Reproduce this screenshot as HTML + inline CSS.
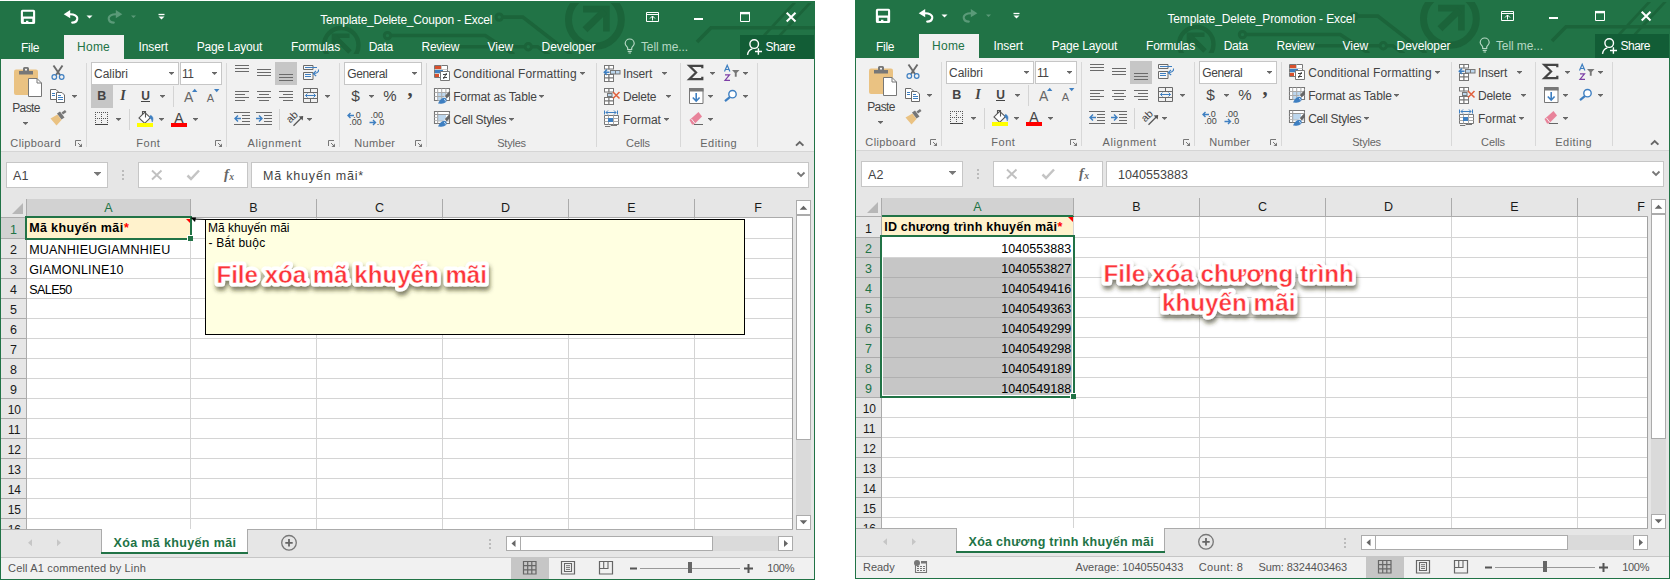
<!DOCTYPE html>
<html><head><meta charset="utf-8"><title>Excel</title><style>html,body{margin:0;padding:0;background:#fff;}
body{width:1670px;height:580px;overflow:hidden;position:relative;font-family:"Liberation Sans",sans-serif;}
.w{position:absolute;width:815px;height:580px;overflow:hidden;}
.r{position:absolute;}
.s{position:absolute;overflow:visible;}
.t{position:absolute;white-space:nowrap;line-height:20px;height:20px;font-family:"Liberation Sans",sans-serif;}</style></head><body>
<div class="w" style="left:0px;top:0px">
<div class="r" style="left:0px;top:1px;width:815px;height:579px;background:#217346;"></div>
<div class="r" style="left:0px;top:1px;width:815px;height:58px;background:#217346;"></div>
<svg class="s" style="left:0;top:3px;overflow:hidden" width="815" height="51" viewBox="0 3 815 51" fill="none" stroke="#1b643a" stroke-linecap="butt">
<circle cx="341.300" cy="45.200" r="17.200" stroke-width="4.400"/>
<path d="M334 47V35.700H349.500" stroke-width="4.600"/><path d="M335 37L350 52" stroke-width="5"/>
<circle cx="387.500" cy="35.600" r="3.200" stroke-width="3"/><path d="M391.500 35.600H485.300L514 54.500" stroke-width="3.500"/>
<circle cx="499.200" cy="17.100" r="3.200" stroke-width="3"/><path d="M503.200 17.100H522.800L571 54.500" stroke-width="3.700"/>
<circle cx="528.300" cy="46.800" r="3.200" stroke-width="3"/><path d="M524.300 46.800H428M532.300 46.800H537.700L549 55" stroke-width="3.500"/>
<circle cx="594.900" cy="19.800" r="26.400" stroke-width="7"/>
<path d="M583.100 9.100H606.400V31.500" stroke-width="6.600"/><path d="M585 29.800L604.500 10.800" stroke-width="7"/>
<path d="M815 27.800H711L697 42" stroke-width="3.600"/><path d="M797 0L764 35.600M812.700 0L779.700 35.600" stroke-width="2.700"/>
</svg>
<div class="r" style="left:64px;top:35px;width:60px;height:24px;background:#f1f1f1;"></div>
<div class="r" style="left:740px;top:35px;width:74px;height:24px;background:#125d36;"></div>
<div class="t" style="top:9.84px;font-size:12px;color:#fff;left:320.20px;letter-spacing:-0.225px;">Template_Delete_Coupon - Excel</div>
<div class="t" style="top:37.84px;font-size:12px;color:#fff;left:21.00px;letter-spacing:-0.284px;">File</div>
<div class="t" style="top:36.84px;font-size:12px;color:#217346;left:77.10px;letter-spacing:0.223px;">Home</div>
<div class="t" style="top:36.84px;font-size:12px;color:#fff;left:138.40px;letter-spacing:-0.052px;">Insert</div>
<div class="t" style="top:36.84px;font-size:12px;color:#fff;left:196.70px;letter-spacing:-0.162px;">Page Layout</div>
<div class="t" style="top:36.84px;font-size:12px;color:#fff;left:291.00px;letter-spacing:-0.126px;">Formulas</div>
<div class="t" style="top:36.84px;font-size:12px;color:#fff;left:368.80px;letter-spacing:-0.362px;">Data</div>
<div class="t" style="top:36.84px;font-size:12px;color:#fff;left:421.60px;letter-spacing:-0.307px;">Review</div>
<div class="t" style="top:36.84px;font-size:12px;color:#fff;left:487.50px;letter-spacing:-0.023px;">View</div>
<div class="t" style="top:36.84px;font-size:12px;color:#fff;left:541.60px;letter-spacing:-0.099px;">Developer</div>
<div class="t" style="top:36.84px;font-size:12px;color:#b5d8c3;left:640.90px;letter-spacing:-0.091px;">Tell me...</div>
<div class="t" style="top:36.84px;font-size:12px;color:#fff;left:765.50px;letter-spacing:-0.504px;">Share</div>
<svg class="s" style="left:0;top:0" width="815" height="60" fill="none" stroke="#fff">
<!-- save -->
<rect x="21.900" y="10.800" width="12.200" height="12.200" rx=".6" stroke-width="2.100"/><path d="M22 16.600h12v2.100h-12zM22 18.500h1.800v4.500h-1.800zM32.300 18.500h1.700v4.500h-1.700zM26 20.800h2.400v2.400h-2.400z" fill="#fff" stroke="none"/>
<!-- undo -->
<path d="M63.700 14.200l6.500-4.300v8.400z" fill="#fff" stroke="none"/><path d="M69.500 14.300c4.500-.3 8.100 1.700 7.700 4.700-.4 2.500-2.700 3.600-5 3.600" stroke-width="2.200" stroke-linecap="round"/>
<path d="M86.500 15.500h6l-3 3z" fill="#fff" stroke="none"/>
<!-- redo (disabled) -->
<g stroke="#5a9a78"><path d="M122.300 14.200l-6.500-4.300v8.400z" fill="#5a9a78" stroke="none"/><path d="M116.500 14.300c-4.500-.3-8.100 1.700-7.700 4.700.4 2.500 2.700 3.600 5 3.600" stroke-width="2.200" stroke-linecap="round"/></g>
<path d="M131 15.500h5l-2.500 2.500z" fill="#5a9a78" stroke="none"/>
<!-- customize -->
<path d="M158.500 14.500h6" stroke-width="1.300"/><path d="M158.500 16.500h6l-3 3z" fill="#fff" stroke="none"/>
<!-- ribbon display -->
<path d="M646.500 12.500h12v9h-12z" stroke-width="1"/><path d="M646 14.500h13" stroke-width="1"/><path d="M652.500 20.500v-4.500M650 18.500l2.500-2.500 2.500 2.500" stroke-width="1"/>
<!-- minimize / maximize / close -->
<path d="M694 19h9" stroke-width="2"/>
<path d="M740.500 13h9v8.500h-9z" stroke-width="1"/><path d="M740 13.100h10" stroke-width="2.400"/>
<path d="M786.700 12.700l8.800 8.800M795.500 12.700l-8.800 8.800" stroke-width="2"/>
<!-- bulb -->
<g stroke="#b5d8c3" stroke-width="1.200"><path d="M627.700 49.500v-1.300c0-1.500-2.500-2.300-2.500-4.700a4.500 4.500 0 0 1 9 0c0 2.400-2.500 3.200-2.500 4.700v1.300z"/><path d="M627.700 51.300h4M628.500 53h2.500"/></g>
<!-- share person -->
<circle cx="754.200" cy="44.100" r="4.300" stroke-width="1.400"/><path d="M747.500 54.800c.6-3.400 2.200-5.200 4.800-5.900" stroke-width="1.400"/><path d="M758.400 48.300v6.500M755 51.500h7" stroke-width="1.400"/>
</svg>
<div class="r" style="left:1px;top:59px;width:813px;height:93px;background:#f1f1f1;"></div>
<div class="r" style="left:1px;top:151px;width:813px;height:1px;background:#d5d5d5;"></div>
<div class="r" style="left:86px;top:63px;width:1px;height:84px;background:#d8d8d8;"></div>
<div class="r" style="left:226px;top:63px;width:1px;height:84px;background:#d8d8d8;"></div>
<div class="r" style="left:339px;top:63px;width:1px;height:84px;background:#d8d8d8;"></div>
<div class="r" style="left:426px;top:63px;width:1px;height:84px;background:#d8d8d8;"></div>
<div class="r" style="left:596px;top:63px;width:1px;height:84px;background:#d8d8d8;"></div>
<div class="r" style="left:680px;top:63px;width:1px;height:84px;background:#d8d8d8;"></div>
<div class="r" style="left:757px;top:63px;width:1px;height:84px;background:#d8d8d8;"></div>
<div class="r" style="left:173px;top:86px;width:1px;height:21px;background:#d4d4d4;"></div>
<div class="r" style="left:129px;top:109px;width:1px;height:21px;background:#d4d4d4;"></div>
<div class="r" style="left:279px;top:109px;width:1px;height:21px;background:#d4d4d4;"></div>
<div class="r" style="left:91px;top:62px;width:88px;height:23px;background:#fff;border:1px solid #c6c6c6;box-sizing:border-box;"></div>
<div class="r" style="left:179.5px;top:62px;width:42.5px;height:23px;background:#fff;border:1px solid #c6c6c6;box-sizing:border-box;"></div>
<div class="r" style="left:344px;top:62px;width:78px;height:23px;background:#fff;border:1px solid #c6c6c6;box-sizing:border-box;"></div>
<div class="r" style="left:91px;top:85px;width:22px;height:23px;background:#c6c6c6;"></div>
<div class="r" style="left:275px;top:62px;width:22px;height:23px;background:#c6c6c6;"></div>
<div class="t" style="top:98.34px;font-size:12px;color:#444;left:12.20px;letter-spacing:-0.617px;">Paste</div>
<div class="t" style="top:132.59px;font-size:11px;color:#666;left:10.30px;letter-spacing:0.391px;">Clipboard</div>
<div class="t" style="top:132.59px;font-size:11px;color:#666;left:136.30px;letter-spacing:0.498px;">Font</div>
<div class="t" style="top:132.59px;font-size:11px;color:#666;left:247.60px;letter-spacing:0.565px;">Alignment</div>
<div class="t" style="top:132.59px;font-size:11px;color:#666;left:354.30px;letter-spacing:0.313px;">Number</div>
<div class="t" style="top:132.59px;font-size:11px;color:#666;left:497.20px;letter-spacing:-0.209px;">Styles</div>
<div class="t" style="top:132.59px;font-size:11px;color:#666;left:626.10px;letter-spacing:-0.110px;">Cells</div>
<div class="t" style="top:132.59px;font-size:11px;color:#666;left:700.30px;letter-spacing:0.452px;">Editing</div>
<div class="t" style="top:64.44px;font-size:12px;color:#444;left:94.00px;letter-spacing:-0.001px;">Calibri</div>
<div class="t" style="top:64.44px;font-size:12px;color:#444;left:182.00px;letter-spacing:-0.478px;">11</div>
<div class="t" style="top:64.44px;font-size:12px;color:#444;left:347.30px;letter-spacing:-0.384px;">General</div>
<div class="t" style="top:63.54px;font-size:12px;color:#444;left:453.20px;letter-spacing:0.126px;">Conditional Formatting</div>
<div class="t" style="top:86.74px;font-size:12px;color:#444;left:453.20px;letter-spacing:-0.154px;">Format as Table</div>
<div class="t" style="top:110.34px;font-size:12px;color:#444;left:453.20px;letter-spacing:-0.335px;">Cell Styles</div>
<div class="t" style="top:63.54px;font-size:12px;color:#444;left:623.10px;letter-spacing:-0.168px;">Insert</div>
<div class="t" style="top:86.74px;font-size:12px;color:#444;left:623.10px;letter-spacing:-0.281px;">Delete</div>
<div class="t" style="top:110.34px;font-size:12px;color:#444;left:623.10px;letter-spacing:-0.050px;">Format</div>
<div class="t" style="top:85.87px;font-size:12.5px;color:#444;left:97.30px;font-weight:bold;">B</div>
<div class="t" style="top:86.05px;font-size:14px;color:#444;left:120.30px;font-weight:bold;font-style:italic;font-family:'Liberation Serif',serif;">I</div>
<div class="t" style="top:86.44px;font-size:12px;color:#444;left:141.20px;font-weight:bold;">U</div>
<div class="r" style="left:141px;top:101px;width:9px;height:1px;background:#444;"></div>
<div class="t" style="top:87.45px;font-size:14px;color:#666;left:184.00px;">A</div>
<div class="t" style="top:88.49px;font-size:11px;color:#666;left:206.80px;">A</div>
<div class="t" style="top:107.95px;font-size:14px;color:#444;left:174.30px;">A</div>
<div class="t" style="top:86.43px;font-size:15.5px;color:#444;left:351.30px;">$</div>
<div class="t" style="top:86.40px;font-size:15px;color:#444;left:383.20px;">%</div>
<div class="t" style="top:79.30px;font-size:20.5px;color:#444;left:407.60px;font-weight:bold;font-family:'Liberation Serif',serif;">,</div>
<div class="t" style="top:105.18px;font-size:9px;color:#444;left:353.20px;">.0</div>
<div class="t" style="top:112.38px;font-size:9px;color:#444;left:349.20px;">.00</div>
<div class="t" style="top:105.18px;font-size:9px;color:#444;left:370.50px;">.00</div>
<div class="t" style="top:112.38px;font-size:9px;color:#444;left:376.80px;">.0</div>
<svg class="s" style="left:0;top:0" width="815" height="160" fill="none">
<rect x="14" y="69.500" width="24" height="25.500" rx="2" fill="#eac282"/>
<path d="M19 74.500v-3.500h4v-2.500a1.500 1.500 0 0 1 1.500-1.500h3a1.500 1.500 0 0 1 1.500 1.500v2.500h4v3.500z" fill="#777"/><rect x="25" y="68.800" width="2" height="1.700" fill="#f1f1f1"/>
<path d="M28.500 78.500h8.500l4.500 4.500v13.500h-13z" fill="#fff" stroke="#777" stroke-width="1"/><path d="M37 78.500v4.500h4.500" stroke="#777" stroke-width="1"/>
<path d="M23 122h5v.4l-2.500 2.600-2.500-2.600z" fill="#666"/>
<path d="M53.500 65.500l6.500 9.500M62.500 65.500l-6.500 9.500" stroke="#6a6a6a" stroke-width="1.900"/><circle cx="54.300" cy="77" r="2.300" stroke="#3e7fc1" stroke-width="1.200"/><circle cx="61.700" cy="77" r="2.300" stroke="#3e7fc1" stroke-width="1.200"/>
<path d="M50.500 89.500h5.500l2.500 2.500v7.500h-8z" fill="#fff" stroke="#6a6a6a"/><path d="M56.500 92.500h5.500l2.500 2.500v7.500h-8z" fill="#fff" stroke="#6a6a6a"/>
<path d="M52 93.500h3M52 95.500h3M58 97.500h5M58 99.500h5M58 95.500h3" stroke="#3e7fc1" stroke-width="1"/>
<path d="M72 95h5v.4l-2.500 2.600-2.500-2.600z" fill="#666"/>
<path d="M50.500 118.500l7-4 4 5.500-5 5.500z" fill="#eac282"/><path d="M57 113.500l3-2 4.500 6-3 2z" fill="#777"/><path d="M61.500 112.500l3.500-2.500 1.500 2-3.500 2.500z" fill="#777"/>
<path d="M169 72h5v.4l-2.500 2.600-2.500-2.600z" fill="#666"/>
<path d="M212 72h5v.4l-2.500 2.600-2.500-2.600z" fill="#666"/>
<path d="M412 72h5v.4l-2.500 2.600-2.500-2.600z" fill="#666"/>
<path d="M160 95h5v.4l-2.500 2.600-2.500-2.600z" fill="#666"/>
<path d="M192 92l2.700-3.200 2.700 3.200z" fill="#3e7fc1"/><path d="M214 89h5.400l-2.700 3.200z" fill="#3e7fc1"/>
<rect x="95" y="112" width="1" height="1" fill="#555"/><rect x="97" y="112" width="1" height="1" fill="#555"/><rect x="99" y="112" width="1" height="1" fill="#555"/><rect x="101" y="112" width="1" height="1" fill="#555"/><rect x="103" y="112" width="1" height="1" fill="#555"/><rect x="105" y="112" width="1" height="1" fill="#555"/><rect x="107" y="112" width="1" height="1" fill="#555"/><rect x="95" y="118" width="1" height="1" fill="#555"/><rect x="97" y="118" width="1" height="1" fill="#555"/><rect x="99" y="118" width="1" height="1" fill="#555"/><rect x="101" y="118" width="1" height="1" fill="#555"/><rect x="103" y="118" width="1" height="1" fill="#555"/><rect x="105" y="118" width="1" height="1" fill="#555"/><rect x="107" y="118" width="1" height="1" fill="#555"/><rect x="95" y="112" width="1" height="1" fill="#555"/><rect x="95" y="114" width="1" height="1" fill="#555"/><rect x="95" y="116" width="1" height="1" fill="#555"/><rect x="95" y="118" width="1" height="1" fill="#555"/><rect x="95" y="120" width="1" height="1" fill="#555"/><rect x="95" y="122" width="1" height="1" fill="#555"/><rect x="101" y="112" width="1" height="1" fill="#555"/><rect x="101" y="114" width="1" height="1" fill="#555"/><rect x="101" y="116" width="1" height="1" fill="#555"/><rect x="101" y="118" width="1" height="1" fill="#555"/><rect x="101" y="120" width="1" height="1" fill="#555"/><rect x="101" y="122" width="1" height="1" fill="#555"/><rect x="107" y="112" width="1" height="1" fill="#555"/><rect x="107" y="114" width="1" height="1" fill="#555"/><rect x="107" y="116" width="1" height="1" fill="#555"/><rect x="107" y="118" width="1" height="1" fill="#555"/><rect x="107" y="120" width="1" height="1" fill="#555"/><rect x="107" y="122" width="1" height="1" fill="#555"/>
<rect x="95" y="124" width="13" height="1" fill="#444"/>
<path d="M116 118h5v.4l-2.500 2.600-2.500-2.600z" fill="#666"/>
<path d="M144.700 112.300l5.700 5.400-5.700 5.600-5.700-5.400z" fill="#fff" stroke="#555" stroke-width="1.100"/><path d="M145.500 117.500v-6h-3v3.500" stroke="#555" stroke-width="1.100"/><path d="M150.500 115.300c2.500 1 3.300 3.500 1.700 6.800-.3-2-1-3.500-2.700-4.600z" fill="#3e7fc1" stroke="#3e7fc1" stroke-width=".5"/>
<rect x="137" y="123" width="16" height="4" fill="#ffff00"/>
<path d="M159 118h5v.4l-2.500 2.600-2.500-2.600z" fill="#666"/>
<rect x="171" y="123" width="16" height="4" fill="#ff0000"/>
<path d="M193 118h5v.4l-2.500 2.600-2.500-2.600z" fill="#666"/>
<rect x="235" y="65" width="14" height="1" fill="#6a6a6a"/><rect x="235" y="68" width="14" height="1" fill="#6a6a6a"/><rect x="235" y="71" width="14" height="1" fill="#6a6a6a"/>
<rect x="257" y="69" width="14" height="1" fill="#6a6a6a"/><rect x="257" y="72" width="14" height="1" fill="#6a6a6a"/><rect x="257" y="75" width="14" height="1" fill="#6a6a6a"/>
<rect x="279" y="74" width="14" height="1" fill="#6a6a6a"/><rect x="279" y="77" width="14" height="1" fill="#6a6a6a"/><rect x="279" y="80" width="14" height="1" fill="#6a6a6a"/>
<rect x="235" y="91" width="14" height="1" fill="#6a6a6a"/><rect x="235" y="94" width="10" height="1" fill="#6a6a6a"/><rect x="235" y="97" width="14" height="1" fill="#6a6a6a"/><rect x="235" y="100" width="10" height="1" fill="#6a6a6a"/>
<rect x="257" y="91" width="14" height="1" fill="#6a6a6a"/><rect x="259.0" y="94" width="10" height="1" fill="#6a6a6a"/><rect x="257" y="97" width="14" height="1" fill="#6a6a6a"/><rect x="259.0" y="100" width="10" height="1" fill="#6a6a6a"/>
<rect x="279" y="91" width="14" height="1" fill="#6a6a6a"/><rect x="283" y="94" width="10" height="1" fill="#6a6a6a"/><rect x="279" y="97" width="14" height="1" fill="#6a6a6a"/><rect x="283" y="100" width="10" height="1" fill="#6a6a6a"/>
<path d="M303.500 65.500h9.500v4h-9.500zM303.500 72.500h9.500v7h-9.500z" stroke="#6a6a6a" fill="#f6f6f6"/><path d="M305 67.500h12M305 74.500h6M305 76.500h6" stroke="#3e7fc1"/><path d="M318.500 69.500c.5 2.500-1.500 4-5 4" stroke="#3e7fc1" stroke-width="1.100"/><path d="M316 71l-2.800 2.600 3 2.400" stroke="#3e7fc1" stroke-width="1.100"/>
<path d="M303.500 88.500h14v14h-14zM303.500 92.500h14M303.500 98.500h14M310.500 88.500v4M310.500 98.500v4" stroke="#6a6a6a"/><path d="M305.500 95.500h10M307.500 93.500l-2 2 2 2M313.500 93.500l2 2-2 2" stroke="#3e7fc1"/>
<path d="M325 95h5v.4l-2.500 2.600-2.500-2.600z" fill="#666"/>
<rect x="234" y="112" width="16" height="1" fill="#6a6a6a"/><rect x="234" y="124" width="16" height="1" fill="#6a6a6a"/>
<rect x="242" y="115" width="8" height="1" fill="#6a6a6a"/><rect x="242" y="118" width="8" height="1" fill="#6a6a6a"/><rect x="242" y="121" width="8" height="1" fill="#6a6a6a"/>
<path d="M241 118.500h-6M238 115.500l-3 3 3 3" stroke="#3e7fc1" stroke-width="1.400"/>
<rect x="256" y="112" width="16" height="1" fill="#6a6a6a"/><rect x="256" y="124" width="16" height="1" fill="#6a6a6a"/>
<rect x="264" y="115" width="8" height="1" fill="#6a6a6a"/><rect x="264" y="118" width="8" height="1" fill="#6a6a6a"/><rect x="264" y="121" width="8" height="1" fill="#6a6a6a"/>
<path d="M256 118.500h6M259 115.500l3 3-3 3" stroke="#3e7fc1" stroke-width="1.400"/>
<path d="M293.500 125.700l8-8" stroke="#555" stroke-width="1.300"/><path d="M303.200 116l-4.600.5 4.100 4.100z" fill="#555"/>
<text transform="translate(290.300 123.600) rotate(-45)" font-size="10.500" fill="#444" font-family="Liberation Sans">ab</text>
<path d="M307 118h5v.4l-2.500 2.600-2.500-2.600z" fill="#666"/>
<path d="M369 95h5v.4l-2.500 2.600-2.500-2.600z" fill="#666"/>
<path d="M348 115.500h6M350.500 113l-2.500 2.500 2.500 2.500" stroke="#3e7fc1" stroke-width="1.400"/><path d="M369.500 122.500h6M373 120l2.500 2.500-2.500 2.500" stroke="#3e7fc1" stroke-width="1.400"/>
</svg>
<svg class="s" style="left:0;top:0" width="815" height="160" fill="none">
<path d="M434.500 65.500h13v12h-13z" fill="#fff" stroke="#777"/><path d="M441.500 65.500v12M434.500 69.500h13M434.500 73.500h13" stroke="#c8c8c8"/>
<rect x="435" y="66" width="6" height="3" fill="#d9502c"/><rect x="435" y="70" width="8" height="3" fill="#3e7fc1"/><rect x="435" y="74" width="4" height="3" fill="#d9502c"/>
<path d="M440.500 71.500h9v9h-9z" fill="#fff" stroke="#777"/><path d="M443 74.500h4M443 77.500h4M446.500 73l-3 6" stroke="#444" stroke-width="1"/>
<path d="M434.500 88.5h15v12h-15z" fill="#fff" stroke="#777" stroke-width="1.100"/>
<rect x="438" y="92.5" width="8" height="8" fill="#bdd7ee"/><path d="M434.500 92.5h15M434.500 96.5h15M437.700 88.5v12M441.700 88.5v12M445.900 88.5v12" stroke="#aaa"/>
<path d="M451 89.0l-12.500 14.500h3l9.500-11z" fill="#f1f1f1"/>
<path d="M450 90.5v4.600l-3.300 3.300-1.800-2.500z" fill="#666"/>
<path d="M438 103.6c1.500-3.200 3.500-5.800 6.200-5.800 1.500 0 2.500 1 2.500 2.400 0 2.600-3.700 3.900-8.700 3.400z" fill="#3e7fc1"/><path d="M444 99.3c1 .2 1.500 1 1.300 2" stroke="#fff" stroke-width=".8" fill="none"/>
<path d="M434.500 111.5h15v12h-15z" fill="#fff" stroke="#777" stroke-width="1.100"/>
<rect x="438" y="115.0" width="8" height="6" fill="#bdd7ee"/><path d="M434.500 114.5h15M437.700 111.5v12" stroke="#999"/><path d="M434.500 117.5h3M434.500 120.5h3M438 121.0h11" stroke="#bbb" stroke-width="1"/>
<path d="M451 112.0l-12.500 14.500h3l9.500-11z" fill="#f1f1f1"/>
<path d="M450 113.5v4.600l-3.300 3.300-1.800-2.500z" fill="#666"/>
<path d="M438 126.6c1.500-3.200 3.500-5.800 6.200-5.800 1.500 0 2.500 1 2.500 2.400 0 2.600-3.700 3.900-8.700 3.400z" fill="#3e7fc1"/><path d="M444 122.3c1 .2 1.500 1 1.300 2" stroke="#fff" stroke-width=".8" fill="none"/>
<path d="M580 72h5v.4l-2.500 2.600-2.500-2.600z" fill="#666"/>
<path d="M539 95h5v.4l-2.500 2.600-2.500-2.600z" fill="#666"/>
<path d="M509 118h5v.4l-2.500 2.600-2.500-2.600z" fill="#666"/>
<rect x="604.5" y="65.5" width="4.500" height="3.500" stroke="#777" fill="#fff"/><rect x="609.0" y="65.5" width="4.500" height="3.500" stroke="#777" fill="#fff"/>
<rect x="604.5" y="74.5" width="4.500" height="3.500" stroke="#777" fill="#fff"/><rect x="609.0" y="74.5" width="4.500" height="3.500" stroke="#777" fill="#fff"/><rect x="604.5" y="78.0" width="4.500" height="3.500" stroke="#777" fill="#fff"/><rect x="609.0" y="78.0" width="4.500" height="3.500" stroke="#777" fill="#fff"/>
<rect x="610.500" y="70.500" width="9.500" height="3.500" stroke="#777" fill="#bdd7ee"/><path d="M615.500 70.500v3.500" stroke="#777"/>
<path d="M609.500 72.200h-5M607 69.500l-2.700 2.700 2.700 2.700" stroke="#3e7fc1" stroke-width="1.500"/>
<path d="M662 72h5v.4l-2.500 2.600-2.500-2.600z" fill="#666"/>
<rect x="604.5" y="88.5" width="4.500" height="3.500" stroke="#777" fill="#fff"/><rect x="609.0" y="88.5" width="4.500" height="3.500" stroke="#777" fill="#fff"/>
<rect x="604.5" y="97.5" width="4.500" height="3.500" stroke="#777" fill="#fff"/><rect x="609.0" y="97.5" width="4.500" height="3.500" stroke="#777" fill="#fff"/><rect x="604.5" y="101.0" width="4.500" height="3.500" stroke="#777" fill="#fff"/><rect x="609.0" y="101.0" width="4.500" height="3.500" stroke="#777" fill="#fff"/>
<rect x="607.500" y="93.500" width="4.500" height="3" stroke="#777" fill="#bdd7ee"/>
<path d="M613 92l6.500 6.500M619.500 92l-6.500 6.500" stroke="#e0603c" stroke-width="1.500"/>
<path d="M666 95h5v.4l-2.500 2.600-2.500-2.600z" fill="#666"/>
<path d="M604.500 110.500v4M617.500 110.500v4M606 112.500h10M608 110.500l-2 2 2 2M614 110.500l2 2-2 2" stroke="#3e7fc1"/>
<path d="M604.500 115.500h14v9h-14z" fill="#fff" stroke="#777"/><path d="M604.500 118.500h14M604.500 121.500h14M608.500 115.500v9M613.500 115.500v9" stroke="#aaa"/><rect x="608" y="118" width="5" height="4" fill="#3e7fc1"/><path d="M605 126.500h5l1-1h6" stroke="#777"/>
<path d="M664 118h5v.4l-2.500 2.600-2.500-2.600z" fill="#666"/>
<path d="M702.300 68.300v-2.500h-13l6.800 6.700-6.800 6.700h13v-2.500" stroke="#444" stroke-width="2.200" stroke-linejoin="miter"/>
<path d="M710 72h5v.4l-2.500 2.600-2.500-2.600z" fill="#666"/>
<path d="M724.500 71.500l2.700-6.300 2.700 6.300M725.500 69.500h3.500" stroke="#3e7fc1" stroke-width="1.200"/><path d="M725 74.800h4.500l-4.500 5.500h5" stroke="#7d3fa6" stroke-width="1.200"/>
<path d="M732 70h7.500l-2.800 3v3.800h-1.900v-3.800z" fill="#777"/>
<path d="M743 72h5v.4l-2.500 2.600-2.500-2.600z" fill="#666"/>
<path d="M689.500 88.500h13.500v15h-13.500z" fill="#fff" stroke="#777"/><rect x="689" y="88" width="14.500" height="3.500" fill="#777"/><path d="M696.200 93v8M692.800 97.500l3.400 3.500 3.400-3.500" stroke="#3e7fc1" stroke-width="1.600"/>
<path d="M708 95h5v.4l-2.500 2.600-2.500-2.600z" fill="#666"/>
<circle cx="732.500" cy="94.200" r="3.700" stroke="#3e7fc1" stroke-width="1.400" fill="#fff"/><path d="M729.800 97.200l-4.800 4" stroke="#3e7fc1" stroke-width="2.200"/>
<path d="M743 95h5v.4l-2.500 2.600-2.500-2.600z" fill="#666"/>
<path d="M689.500 120l9-8 3.500 4.500-8 8h-2z" fill="#e8839a"/><path d="M691.500 119l3.500 4.500" stroke="#f1f1f1" stroke-width="1"/><rect x="694" y="124" width="9" height="1" fill="#666"/>
<path d="M708 118h5v.4l-2.500 2.600-2.500-2.600z" fill="#666"/>
<path d="M75.5 146v-5.500h5.500" stroke="#777"/><path d="M78 143l3 3" stroke="#777"/><path d="M82 143.500v3.500h-3.500z" fill="#777"/>
<path d="M215.5 146v-5.500h5.500" stroke="#777"/><path d="M218 143l3 3" stroke="#777"/><path d="M222 143.500v3.500h-3.500z" fill="#777"/>
<path d="M328.5 146v-5.500h5.500" stroke="#777"/><path d="M331 143l3 3" stroke="#777"/><path d="M335 143.500v3.500h-3.500z" fill="#777"/>
<path d="M415.5 146v-5.500h5.500" stroke="#777"/><path d="M418 143l3 3" stroke="#777"/><path d="M422 143.500v3.500h-3.500z" fill="#777"/>
<path d="M796 145.700l3.700-3.700 3.700 3.700" stroke="#666" stroke-width="1.900"/>
</svg>
<div class="r" style="left:1px;top:152px;width:813px;height:47px;background:#e6e6e6;"></div>
<div class="r" style="left:6px;top:162px;width:102px;height:26px;background:#fff;border:1px solid #c6c6c6;box-sizing:border-box;"></div>
<div class="r" style="left:138px;top:162px;width:110px;height:26px;background:#fff;border:1px solid #c6c6c6;box-sizing:border-box;"></div>
<div class="r" style="left:251px;top:162px;width:558px;height:26px;background:#fff;border:1px solid #c6c6c6;box-sizing:border-box;"></div>
<div class="t" style="top:166.37px;font-size:12.5px;color:#444;left:13.00px;letter-spacing:0.105px;">A1</div>
<div class="t" style="top:166.37px;font-size:12.5px;color:#444;left:263.00px;letter-spacing:0.813px;">Mã khuyến mãi*</div>
<svg class="s" style="left:0;top:150px" width="815" height="50" viewBox="0 150 815 50" fill="none">
<path d="M94 172h7v.5l-3.500 3.500-3.500-3.500z" fill="#777"/>
<rect x="122" y="170" width="2" height="2" fill="#bbb"/><rect x="122" y="174" width="2" height="2" fill="#bbb"/><rect x="122" y="178" width="2" height="2" fill="#bbb"/>
<path d="M152 170.500l9.500 9M161.500 170.500l-9.500 9" stroke="#c0c0c0" stroke-width="1.900"/>
<path d="M187.500 175.500l3.500 3.500 8-8.500" stroke="#c4c4c4" stroke-width="2.500"/>
<path d="M797.500 172.500l3.500 3.500 3.500-3.500" stroke="#777" stroke-width="1.800"/>
</svg>
<div class="t" style="top:164.28px;font-size:14.5px;color:#666;left:224.00px;font-weight:bold;font-style:italic;font-family:'Liberation Serif',serif;">f</div>
<div class="t" style="top:166.91px;font-size:9.5px;color:#666;left:229.20px;font-weight:bold;font-style:italic;font-family:'Liberation Serif',serif;">x</div>
<div class="r" style="left:1px;top:199px;width:813px;height:331px;background:#e6e6e6;"></div>
<div class="r" style="left:27px;top:218px;width:766px;height:312px;background:#fff;"></div>
<div class="r" style="left:1px;top:217px;width:793px;height:1px;background:#ababab;"></div>
<div class="r" style="left:26px;top:199px;width:1px;height:331px;background:#ababab;"></div>
<div class="r" style="left:27px;top:199px;width:163px;height:18px;background:#d2d2d2;"></div>
<div class="r" style="left:27px;top:216px;width:164px;height:2px;background:#217346;"></div>
<div class="r" style="left:1px;top:218px;width:25px;height:20px;background:#d2d2d2;"></div>
<div class="r" style="left:190px;top:199px;width:1px;height:18px;background:#ababab;"></div>
<div class="r" style="left:316px;top:199px;width:1px;height:18px;background:#ababab;"></div>
<div class="r" style="left:442px;top:199px;width:1px;height:18px;background:#ababab;"></div>
<div class="r" style="left:568px;top:199px;width:1px;height:18px;background:#ababab;"></div>
<div class="r" style="left:694px;top:199px;width:1px;height:18px;background:#ababab;"></div>
<div class="r" style="left:190px;top:218px;width:1px;height:312px;background:#d4d4d4;"></div>
<div class="r" style="left:316px;top:218px;width:1px;height:312px;background:#d4d4d4;"></div>
<div class="r" style="left:442px;top:218px;width:1px;height:312px;background:#d4d4d4;"></div>
<div class="r" style="left:568px;top:218px;width:1px;height:312px;background:#d4d4d4;"></div>
<div class="r" style="left:694px;top:218px;width:1px;height:312px;background:#d4d4d4;"></div>
<div class="r" style="left:27px;top:238px;width:766px;height:1px;background:#d4d4d4;"></div>
<div class="r" style="left:1px;top:238px;width:25px;height:1px;background:#ababab;"></div>
<div class="r" style="left:27px;top:258px;width:766px;height:1px;background:#d4d4d4;"></div>
<div class="r" style="left:1px;top:258px;width:25px;height:1px;background:#ababab;"></div>
<div class="r" style="left:27px;top:278px;width:766px;height:1px;background:#d4d4d4;"></div>
<div class="r" style="left:1px;top:278px;width:25px;height:1px;background:#ababab;"></div>
<div class="r" style="left:27px;top:298px;width:766px;height:1px;background:#d4d4d4;"></div>
<div class="r" style="left:1px;top:298px;width:25px;height:1px;background:#ababab;"></div>
<div class="r" style="left:27px;top:318px;width:766px;height:1px;background:#d4d4d4;"></div>
<div class="r" style="left:1px;top:318px;width:25px;height:1px;background:#ababab;"></div>
<div class="r" style="left:27px;top:338px;width:766px;height:1px;background:#d4d4d4;"></div>
<div class="r" style="left:1px;top:338px;width:25px;height:1px;background:#ababab;"></div>
<div class="r" style="left:27px;top:358px;width:766px;height:1px;background:#d4d4d4;"></div>
<div class="r" style="left:1px;top:358px;width:25px;height:1px;background:#ababab;"></div>
<div class="r" style="left:27px;top:378px;width:766px;height:1px;background:#d4d4d4;"></div>
<div class="r" style="left:1px;top:378px;width:25px;height:1px;background:#ababab;"></div>
<div class="r" style="left:27px;top:398px;width:766px;height:1px;background:#d4d4d4;"></div>
<div class="r" style="left:1px;top:398px;width:25px;height:1px;background:#ababab;"></div>
<div class="r" style="left:27px;top:418px;width:766px;height:1px;background:#d4d4d4;"></div>
<div class="r" style="left:1px;top:418px;width:25px;height:1px;background:#ababab;"></div>
<div class="r" style="left:27px;top:438px;width:766px;height:1px;background:#d4d4d4;"></div>
<div class="r" style="left:1px;top:438px;width:25px;height:1px;background:#ababab;"></div>
<div class="r" style="left:27px;top:458px;width:766px;height:1px;background:#d4d4d4;"></div>
<div class="r" style="left:1px;top:458px;width:25px;height:1px;background:#ababab;"></div>
<div class="r" style="left:27px;top:478px;width:766px;height:1px;background:#d4d4d4;"></div>
<div class="r" style="left:1px;top:478px;width:25px;height:1px;background:#ababab;"></div>
<div class="r" style="left:27px;top:498px;width:766px;height:1px;background:#d4d4d4;"></div>
<div class="r" style="left:1px;top:498px;width:25px;height:1px;background:#ababab;"></div>
<div class="r" style="left:27px;top:518px;width:766px;height:1px;background:#d4d4d4;"></div>
<div class="r" style="left:1px;top:518px;width:25px;height:1px;background:#ababab;"></div>
<div class="r" style="left:792px;top:218px;width:1px;height:312px;background:#a0a0a0;"></div>
<div class="r" style="left:1px;top:529px;width:813px;height:1px;background:#ababab;"></div>
<svg class="s" style="left:10px;top:201px" width="14" height="14"><path d="M13 2v11h-11z" fill="#b7b7b7"/></svg>
<div class="t" style="top:198.37px;font-size:12.5px;color:#217346;left:104.33px;">A</div>
<div class="t" style="top:198.37px;font-size:12.5px;color:#1a1a1a;left:249.33px;">B</div>
<div class="t" style="top:198.37px;font-size:12.5px;color:#1a1a1a;left:374.99px;">C</div>
<div class="t" style="top:198.37px;font-size:12.5px;color:#1a1a1a;left:500.99px;">D</div>
<div class="t" style="top:198.37px;font-size:12.5px;color:#1a1a1a;left:627.33px;">E</div>
<div class="t" style="top:198.37px;font-size:12.5px;color:#1a1a1a;left:754.18px;">F</div>
<div class="t" style="top:220.07px;font-size:12.5px;color:#217346;left:10.12px;">1</div>
<div class="t" style="top:240.07px;font-size:12.5px;color:#1a1a1a;left:10.12px;">2</div>
<div class="t" style="top:260.07px;font-size:12.5px;color:#1a1a1a;left:10.12px;">3</div>
<div class="t" style="top:280.07px;font-size:12.5px;color:#1a1a1a;left:10.12px;">4</div>
<div class="t" style="top:300.07px;font-size:12.5px;color:#1a1a1a;left:10.12px;">5</div>
<div class="t" style="top:320.07px;font-size:12.5px;color:#1a1a1a;left:10.12px;">6</div>
<div class="t" style="top:340.07px;font-size:12.5px;color:#1a1a1a;left:10.12px;">7</div>
<div class="t" style="top:360.07px;font-size:12.5px;color:#1a1a1a;left:10.12px;">8</div>
<div class="t" style="top:380.07px;font-size:12.5px;color:#1a1a1a;left:10.12px;">9</div>
<div class="t" style="top:400.24px;font-size:12px;color:#1a1a1a;left:7.63px;">10</div>
<div class="t" style="top:420.24px;font-size:12px;color:#1a1a1a;left:8.07px;">11</div>
<div class="t" style="top:440.24px;font-size:12px;color:#1a1a1a;left:7.63px;">12</div>
<div class="t" style="top:460.24px;font-size:12px;color:#1a1a1a;left:7.63px;">13</div>
<div class="t" style="top:480.24px;font-size:12px;color:#1a1a1a;left:7.63px;">14</div>
<div class="t" style="top:500.24px;font-size:12px;color:#1a1a1a;left:7.63px;">15</div>
<div class="r" style="left:1px;top:518px;width:25px;height:11px;overflow:hidden"><div class="t" style="top:2.24px;font-size:12px;color:#1a1a1a;left:6.63px;">16</div></div>
<div class="r" style="left:27px;top:218px;width:163px;height:20px;background:#fff2cc;"></div>
<div class="r" style="left:205px;top:219px;width:540px;height:116px;background:#ffffe1;border:1px solid #000;box-sizing:border-box;"></div>
<div class="t" style="top:218.34px;font-size:12px;color:#000;left:208.00px;letter-spacing:0.010px;">Mã khuyến mãi</div>
<div class="t" style="top:233.44px;font-size:12px;color:#000;left:208.40px;letter-spacing:0.231px;">- Bắt buộc</div>
<div class="r" style="left:25px;top:216px;width:167px;height:24px;background:transparent;border:2px solid #217346;box-sizing:border-box;"></div>
<div class="r" style="left:187px;top:235px;width:6px;height:6px;background:#fff;"></div>
<div class="r" style="left:188px;top:236px;width:5px;height:5px;background:#217346;"></div>
<div class="t" style="top:217.67px;font-size:12.5px;color:#000;left:29.20px;letter-spacing:0.361px;font-weight:bold;">Mã khuyến mãi</div>
<div class="t" style="top:217.67px;font-size:12.5px;color:#f00;left:124.00px;font-weight:bold;">*</div>
<div class="t" style="top:240.17px;font-size:12.5px;color:#000;left:29.20px;letter-spacing:0.217px;">MUANHIEUGIAMNHIEU</div>
<div class="t" style="top:260.17px;font-size:12.5px;color:#000;left:29.20px;letter-spacing:0.176px;">GIAMONLINE10</div>
<div class="t" style="top:280.17px;font-size:12.5px;color:#000;left:29.20px;letter-spacing:-0.561px;">SALE50</div>
<svg class="s" style="left:180px;top:214px" width="30" height="12"><path d="M6 5h4v4z" fill="#f00"/><path d="M10.500 3.500h5.500l-1 4.500z" fill="#000"/><path d="M13 5l12 .5" stroke="#000" stroke-width="1"/></svg>
<svg class="s" style="left:0;top:0" width="815" height="580">
<filter id="sh1" x="-10%" y="-30%" width="120%" height="180%"><feDropShadow dx="1.200" dy="4" stdDeviation="2.200" flood-color="#2d2d19" flood-opacity=".6"/></filter>
<g font-family="Liberation Sans, sans-serif" font-weight="bold" font-size="24.1" text-anchor="middle">
<g filter="url(#sh1)" fill="#fff" stroke="#fff" stroke-width="7" stroke-linejoin="round">
<text x="351.7" y="282.6">File xóa mã khuyến mãi</text>
</g>
<g fill="#fc3439" stroke="#fff" stroke-width=".45">
<text x="351.7" y="282.6">File xóa mã khuyến mãi</text>
</g></g></svg>
<div class="r" style="left:793px;top:199px;width:21px;height:331px;background:#e6e6e6;"></div>
<div class="r" style="left:796px;top:200px;width:15px;height:330px;background:#dadada;"></div>
<div class="r" style="left:796px;top:200px;width:15px;height:15px;background:#fff;border:1px solid #ababab;box-sizing:border-box;"></div>
<div class="r" style="left:796px;top:515px;width:15px;height:15px;background:#fff;border:1px solid #ababab;box-sizing:border-box;"></div>
<div class="r" style="left:796px;top:215px;width:15px;height:225px;background:#fff;border:1px solid #ababab;box-sizing:border-box;"></div>
<svg class="s" style="left:796px;top:200px" width="15" height="330"><path d="M3.700 9.700h7.600l-3.800-3.900z" fill="#666"/><path d="M3.700 320.300h7.600l-3.800 3.900z" fill="#666"/></svg>
<div class="r" style="left:1px;top:530px;width:813px;height:28px;background:#e6e6e6;"></div>
<div class="r" style="left:101px;top:529px;width:147px;height:25px;background:#fff;border-left:1px solid #ababab;border-right:1px solid #ababab;box-sizing:border-box;"></div>
<div class="r" style="left:101px;top:552px;width:147px;height:2px;background:#217346;"></div>
<div class="t" style="top:533.27px;font-size:12.5px;color:#217346;left:113.50px;letter-spacing:0.359px;font-weight:bold;">Xóa mã khuyến mãi</div>
<svg class="s" style="left:0;top:530px" width="815" height="27" viewBox="0 530 815 27" fill="none">
<path d="M32 539.200v7l-4-3.500z" fill="#c6c6c6"/><path d="M57 539.200v7l4-3.500z" fill="#c6c6c6"/>
<circle cx="289" cy="542.800" r="7.300" stroke="#777" stroke-width="1.300"/><path d="M285.3 542.800h7.400M289 539.100v7.400" stroke="#666" stroke-width="1.800"/>
<rect x="489" y="539" width="2" height="2" fill="#bbb"/><rect x="489" y="543" width="2" height="2" fill="#bbb"/><rect x="489" y="547" width="2" height="2" fill="#bbb"/>
</svg>
<div class="r" style="left:506px;top:536px;width:287px;height:15px;background:#dadada;"></div>
<div class="r" style="left:506px;top:536px;width:15px;height:15px;background:#fff;border:1px solid #ababab;box-sizing:border-box;"></div>
<div class="r" style="left:778px;top:536px;width:15px;height:15px;background:#fff;border:1px solid #ababab;box-sizing:border-box;"></div>
<div class="r" style="left:520px;top:536px;width:193px;height:15px;background:#fff;border:1px solid #ababab;box-sizing:border-box;"></div>
<svg class="s" style="left:506px;top:536px" width="287" height="15"><path d="M9.500 4v7l-4-3.500z" fill="#666"/><path d="M278 4v7l4-3.500z" fill="#666"/></svg>
<div class="r" style="left:1px;top:557px;width:813px;height:1px;background:#c6c6c6;"></div>
<div class="r" style="left:1px;top:558px;width:813px;height:21px;background:#f1f1f1;"></div>
<div class="r" style="left:511px;top:558px;width:38px;height:21px;background:#c6c6c6;"></div>
<div class="t" style="top:557.99px;font-size:11px;color:#555;left:8.10px;letter-spacing:0.160px;">Cell A1 commented by Linh</div>
<div class="t" style="top:557.99px;font-size:11px;color:#555;left:767.20px;letter-spacing:-0.283px;">100%</div>
<svg class="s" style="left:0;top:557px" width="815" height="22" viewBox="0 557 815 22" fill="none">
<path d="M523.500 561.500h12.500v12.500h-12.500zM527.700 561.500v12.500M531.800 561.500v12.500M523.500 565.700h12.500M523.500 569.800h12.500" stroke="#666" stroke-width="1.200"/>
<path d="M561.500 561.500h13v12.500h-13z" stroke="#666" stroke-width="1.200"/><path d="M564.500 563.500h7v8h-7z" stroke="#666" stroke-width="1.100"/><path d="M566 565.700h4M566 567.600h4M566 569.500h4" stroke="#666" stroke-width=".9"/>
<path d="M599.500 561.500h13v12.500h-13z" stroke="#666" stroke-width="1.200"/><path d="M599.500 568.500h8.500v-7M603.700 561.500v7" stroke="#666" stroke-width="1.100"/>
<rect x="630" y="567.500" width="7" height="2" fill="#555"/>
<rect x="640" y="568" width="100" height="1" fill="#999"/>
<rect x="688" y="562" width="4" height="11" fill="#666"/>
<path d="M744 568.500h9M748.500 564v9" stroke="#555" stroke-width="2"/>

</svg>
</div>
<div class="w" style="left:855px;top:-1px">
<div class="r" style="left:0px;top:1px;width:815px;height:579px;background:#217346;"></div>
<div class="r" style="left:0px;top:1px;width:815px;height:58px;background:#217346;"></div>
<svg class="s" style="left:0;top:3px;overflow:hidden" width="815" height="51" viewBox="0 3 815 51" fill="none" stroke="#1b643a" stroke-linecap="butt">
<circle cx="341.300" cy="45.200" r="17.200" stroke-width="4.400"/>
<path d="M334 47V35.700H349.500" stroke-width="4.600"/><path d="M335 37L350 52" stroke-width="5"/>
<circle cx="387.500" cy="35.600" r="3.200" stroke-width="3"/><path d="M391.500 35.600H485.300L514 54.500" stroke-width="3.500"/>
<circle cx="499.200" cy="17.100" r="3.200" stroke-width="3"/><path d="M503.200 17.100H522.800L571 54.500" stroke-width="3.700"/>
<circle cx="528.300" cy="46.800" r="3.200" stroke-width="3"/><path d="M524.300 46.800H428M532.300 46.800H537.700L549 55" stroke-width="3.500"/>
<circle cx="594.900" cy="19.800" r="26.400" stroke-width="7"/>
<path d="M583.100 9.100H606.400V31.500" stroke-width="6.600"/><path d="M585 29.800L604.500 10.800" stroke-width="7"/>
<path d="M815 27.800H711L697 42" stroke-width="3.600"/><path d="M797 0L764 35.600M812.700 0L779.700 35.600" stroke-width="2.700"/>
</svg>
<div class="r" style="left:64px;top:35px;width:60px;height:24px;background:#f1f1f1;"></div>
<div class="r" style="left:740px;top:35px;width:74px;height:24px;background:#125d36;"></div>
<div class="t" style="top:9.84px;font-size:12px;color:#fff;left:312.45px;letter-spacing:-0.119px;">Template_Delete_Promotion - Excel</div>
<div class="t" style="top:37.84px;font-size:12px;color:#fff;left:21.00px;letter-spacing:-0.284px;">File</div>
<div class="t" style="top:36.84px;font-size:12px;color:#217346;left:77.10px;letter-spacing:0.223px;">Home</div>
<div class="t" style="top:36.84px;font-size:12px;color:#fff;left:138.40px;letter-spacing:-0.052px;">Insert</div>
<div class="t" style="top:36.84px;font-size:12px;color:#fff;left:196.70px;letter-spacing:-0.162px;">Page Layout</div>
<div class="t" style="top:36.84px;font-size:12px;color:#fff;left:291.00px;letter-spacing:-0.126px;">Formulas</div>
<div class="t" style="top:36.84px;font-size:12px;color:#fff;left:368.80px;letter-spacing:-0.362px;">Data</div>
<div class="t" style="top:36.84px;font-size:12px;color:#fff;left:421.60px;letter-spacing:-0.307px;">Review</div>
<div class="t" style="top:36.84px;font-size:12px;color:#fff;left:487.50px;letter-spacing:-0.023px;">View</div>
<div class="t" style="top:36.84px;font-size:12px;color:#fff;left:541.60px;letter-spacing:-0.099px;">Developer</div>
<div class="t" style="top:36.84px;font-size:12px;color:#b5d8c3;left:640.90px;letter-spacing:-0.091px;">Tell me...</div>
<div class="t" style="top:36.84px;font-size:12px;color:#fff;left:765.50px;letter-spacing:-0.504px;">Share</div>
<svg class="s" style="left:0;top:0" width="815" height="60" fill="none" stroke="#fff">
<!-- save -->
<rect x="21.900" y="10.800" width="12.200" height="12.200" rx=".6" stroke-width="2.100"/><path d="M22 16.600h12v2.100h-12zM22 18.500h1.800v4.500h-1.800zM32.300 18.500h1.700v4.500h-1.700zM26 20.800h2.400v2.400h-2.400z" fill="#fff" stroke="none"/>
<!-- undo -->
<path d="M63.700 14.200l6.500-4.300v8.400z" fill="#fff" stroke="none"/><path d="M69.500 14.300c4.500-.3 8.100 1.700 7.700 4.700-.4 2.500-2.700 3.600-5 3.600" stroke-width="2.200" stroke-linecap="round"/>
<path d="M86.500 15.500h6l-3 3z" fill="#fff" stroke="none"/>
<!-- redo (disabled) -->
<g stroke="#5a9a78"><path d="M122.300 14.200l-6.500-4.300v8.400z" fill="#5a9a78" stroke="none"/><path d="M116.500 14.300c-4.500-.3-8.100 1.700-7.700 4.700.4 2.500 2.700 3.600 5 3.600" stroke-width="2.200" stroke-linecap="round"/></g>
<path d="M131 15.500h5l-2.500 2.500z" fill="#5a9a78" stroke="none"/>
<!-- customize -->
<path d="M158.500 14.500h6" stroke-width="1.300"/><path d="M158.500 16.500h6l-3 3z" fill="#fff" stroke="none"/>
<!-- ribbon display -->
<path d="M646.500 12.500h12v9h-12z" stroke-width="1"/><path d="M646 14.500h13" stroke-width="1"/><path d="M652.500 20.500v-4.500M650 18.500l2.500-2.500 2.500 2.500" stroke-width="1"/>
<!-- minimize / maximize / close -->
<path d="M694 19h9" stroke-width="2"/>
<path d="M740.500 13h9v8.500h-9z" stroke-width="1"/><path d="M740 13.100h10" stroke-width="2.400"/>
<path d="M786.700 12.700l8.800 8.800M795.500 12.700l-8.800 8.800" stroke-width="2"/>
<!-- bulb -->
<g stroke="#b5d8c3" stroke-width="1.200"><path d="M627.700 49.500v-1.300c0-1.500-2.500-2.300-2.500-4.700a4.500 4.500 0 0 1 9 0c0 2.400-2.500 3.200-2.500 4.700v1.300z"/><path d="M627.700 51.300h4M628.500 53h2.500"/></g>
<!-- share person -->
<circle cx="754.200" cy="44.100" r="4.300" stroke-width="1.400"/><path d="M747.500 54.800c.6-3.400 2.200-5.200 4.800-5.900" stroke-width="1.400"/><path d="M758.400 48.300v6.500M755 51.500h7" stroke-width="1.400"/>
</svg>
<div class="r" style="left:1px;top:59px;width:813px;height:93px;background:#f1f1f1;"></div>
<div class="r" style="left:1px;top:151px;width:813px;height:1px;background:#d5d5d5;"></div>
<div class="r" style="left:86px;top:63px;width:1px;height:84px;background:#d8d8d8;"></div>
<div class="r" style="left:226px;top:63px;width:1px;height:84px;background:#d8d8d8;"></div>
<div class="r" style="left:339px;top:63px;width:1px;height:84px;background:#d8d8d8;"></div>
<div class="r" style="left:426px;top:63px;width:1px;height:84px;background:#d8d8d8;"></div>
<div class="r" style="left:596px;top:63px;width:1px;height:84px;background:#d8d8d8;"></div>
<div class="r" style="left:680px;top:63px;width:1px;height:84px;background:#d8d8d8;"></div>
<div class="r" style="left:757px;top:63px;width:1px;height:84px;background:#d8d8d8;"></div>
<div class="r" style="left:173px;top:86px;width:1px;height:21px;background:#d4d4d4;"></div>
<div class="r" style="left:129px;top:109px;width:1px;height:21px;background:#d4d4d4;"></div>
<div class="r" style="left:279px;top:109px;width:1px;height:21px;background:#d4d4d4;"></div>
<div class="r" style="left:91px;top:62px;width:88px;height:23px;background:#fff;border:1px solid #c6c6c6;box-sizing:border-box;"></div>
<div class="r" style="left:179.5px;top:62px;width:42.5px;height:23px;background:#fff;border:1px solid #c6c6c6;box-sizing:border-box;"></div>
<div class="r" style="left:344px;top:62px;width:78px;height:23px;background:#fff;border:1px solid #c6c6c6;box-sizing:border-box;"></div>
<div class="r" style="left:275px;top:62px;width:22px;height:23px;background:#c6c6c6;"></div>
<div class="t" style="top:98.34px;font-size:12px;color:#444;left:12.20px;letter-spacing:-0.617px;">Paste</div>
<div class="t" style="top:132.59px;font-size:11px;color:#666;left:10.30px;letter-spacing:0.391px;">Clipboard</div>
<div class="t" style="top:132.59px;font-size:11px;color:#666;left:136.30px;letter-spacing:0.498px;">Font</div>
<div class="t" style="top:132.59px;font-size:11px;color:#666;left:247.60px;letter-spacing:0.565px;">Alignment</div>
<div class="t" style="top:132.59px;font-size:11px;color:#666;left:354.30px;letter-spacing:0.313px;">Number</div>
<div class="t" style="top:132.59px;font-size:11px;color:#666;left:497.20px;letter-spacing:-0.209px;">Styles</div>
<div class="t" style="top:132.59px;font-size:11px;color:#666;left:626.10px;letter-spacing:-0.110px;">Cells</div>
<div class="t" style="top:132.59px;font-size:11px;color:#666;left:700.30px;letter-spacing:0.452px;">Editing</div>
<div class="t" style="top:64.44px;font-size:12px;color:#444;left:94.00px;letter-spacing:-0.001px;">Calibri</div>
<div class="t" style="top:64.44px;font-size:12px;color:#444;left:182.00px;letter-spacing:-0.478px;">11</div>
<div class="t" style="top:64.44px;font-size:12px;color:#444;left:347.30px;letter-spacing:-0.384px;">General</div>
<div class="t" style="top:63.54px;font-size:12px;color:#444;left:453.20px;letter-spacing:0.126px;">Conditional Formatting</div>
<div class="t" style="top:86.74px;font-size:12px;color:#444;left:453.20px;letter-spacing:-0.154px;">Format as Table</div>
<div class="t" style="top:110.34px;font-size:12px;color:#444;left:453.20px;letter-spacing:-0.335px;">Cell Styles</div>
<div class="t" style="top:63.54px;font-size:12px;color:#444;left:623.10px;letter-spacing:-0.168px;">Insert</div>
<div class="t" style="top:86.74px;font-size:12px;color:#444;left:623.10px;letter-spacing:-0.281px;">Delete</div>
<div class="t" style="top:110.34px;font-size:12px;color:#444;left:623.10px;letter-spacing:-0.050px;">Format</div>
<div class="t" style="top:85.87px;font-size:12.5px;color:#444;left:97.30px;font-weight:bold;">B</div>
<div class="t" style="top:86.05px;font-size:14px;color:#444;left:120.30px;font-weight:bold;font-style:italic;font-family:'Liberation Serif',serif;">I</div>
<div class="t" style="top:86.44px;font-size:12px;color:#444;left:141.20px;font-weight:bold;">U</div>
<div class="r" style="left:141px;top:101px;width:9px;height:1px;background:#444;"></div>
<div class="t" style="top:87.45px;font-size:14px;color:#666;left:184.00px;">A</div>
<div class="t" style="top:88.49px;font-size:11px;color:#666;left:206.80px;">A</div>
<div class="t" style="top:107.95px;font-size:14px;color:#444;left:174.30px;">A</div>
<div class="t" style="top:86.43px;font-size:15.5px;color:#444;left:351.30px;">$</div>
<div class="t" style="top:86.40px;font-size:15px;color:#444;left:383.20px;">%</div>
<div class="t" style="top:79.30px;font-size:20.5px;color:#444;left:407.60px;font-weight:bold;font-family:'Liberation Serif',serif;">,</div>
<div class="t" style="top:105.18px;font-size:9px;color:#444;left:353.20px;">.0</div>
<div class="t" style="top:112.38px;font-size:9px;color:#444;left:349.20px;">.00</div>
<div class="t" style="top:105.18px;font-size:9px;color:#444;left:370.50px;">.00</div>
<div class="t" style="top:112.38px;font-size:9px;color:#444;left:376.80px;">.0</div>
<svg class="s" style="left:0;top:0" width="815" height="160" fill="none">
<rect x="14" y="69.500" width="24" height="25.500" rx="2" fill="#eac282"/>
<path d="M19 74.500v-3.500h4v-2.500a1.500 1.500 0 0 1 1.500-1.500h3a1.500 1.500 0 0 1 1.500 1.500v2.500h4v3.500z" fill="#777"/><rect x="25" y="68.800" width="2" height="1.700" fill="#f1f1f1"/>
<path d="M28.500 78.500h8.500l4.500 4.500v13.500h-13z" fill="#fff" stroke="#777" stroke-width="1"/><path d="M37 78.500v4.500h4.500" stroke="#777" stroke-width="1"/>
<path d="M23 122h5v.4l-2.500 2.600-2.500-2.600z" fill="#666"/>
<path d="M53.500 65.500l6.500 9.500M62.500 65.500l-6.500 9.500" stroke="#6a6a6a" stroke-width="1.900"/><circle cx="54.300" cy="77" r="2.300" stroke="#3e7fc1" stroke-width="1.200"/><circle cx="61.700" cy="77" r="2.300" stroke="#3e7fc1" stroke-width="1.200"/>
<path d="M50.500 89.500h5.500l2.500 2.500v7.500h-8z" fill="#fff" stroke="#6a6a6a"/><path d="M56.500 92.500h5.500l2.500 2.500v7.500h-8z" fill="#fff" stroke="#6a6a6a"/>
<path d="M52 93.500h3M52 95.500h3M58 97.500h5M58 99.500h5M58 95.500h3" stroke="#3e7fc1" stroke-width="1"/>
<path d="M72 95h5v.4l-2.500 2.600-2.500-2.600z" fill="#666"/>
<path d="M50.500 118.500l7-4 4 5.500-5 5.500z" fill="#eac282"/><path d="M57 113.500l3-2 4.500 6-3 2z" fill="#777"/><path d="M61.500 112.500l3.500-2.500 1.500 2-3.500 2.500z" fill="#777"/>
<path d="M169 72h5v.4l-2.500 2.600-2.500-2.600z" fill="#666"/>
<path d="M212 72h5v.4l-2.500 2.600-2.500-2.600z" fill="#666"/>
<path d="M412 72h5v.4l-2.500 2.600-2.500-2.600z" fill="#666"/>
<path d="M160 95h5v.4l-2.500 2.600-2.500-2.600z" fill="#666"/>
<path d="M192 92l2.700-3.200 2.700 3.200z" fill="#3e7fc1"/><path d="M214 89h5.400l-2.700 3.200z" fill="#3e7fc1"/>
<rect x="95" y="112" width="1" height="1" fill="#555"/><rect x="97" y="112" width="1" height="1" fill="#555"/><rect x="99" y="112" width="1" height="1" fill="#555"/><rect x="101" y="112" width="1" height="1" fill="#555"/><rect x="103" y="112" width="1" height="1" fill="#555"/><rect x="105" y="112" width="1" height="1" fill="#555"/><rect x="107" y="112" width="1" height="1" fill="#555"/><rect x="95" y="118" width="1" height="1" fill="#555"/><rect x="97" y="118" width="1" height="1" fill="#555"/><rect x="99" y="118" width="1" height="1" fill="#555"/><rect x="101" y="118" width="1" height="1" fill="#555"/><rect x="103" y="118" width="1" height="1" fill="#555"/><rect x="105" y="118" width="1" height="1" fill="#555"/><rect x="107" y="118" width="1" height="1" fill="#555"/><rect x="95" y="112" width="1" height="1" fill="#555"/><rect x="95" y="114" width="1" height="1" fill="#555"/><rect x="95" y="116" width="1" height="1" fill="#555"/><rect x="95" y="118" width="1" height="1" fill="#555"/><rect x="95" y="120" width="1" height="1" fill="#555"/><rect x="95" y="122" width="1" height="1" fill="#555"/><rect x="101" y="112" width="1" height="1" fill="#555"/><rect x="101" y="114" width="1" height="1" fill="#555"/><rect x="101" y="116" width="1" height="1" fill="#555"/><rect x="101" y="118" width="1" height="1" fill="#555"/><rect x="101" y="120" width="1" height="1" fill="#555"/><rect x="101" y="122" width="1" height="1" fill="#555"/><rect x="107" y="112" width="1" height="1" fill="#555"/><rect x="107" y="114" width="1" height="1" fill="#555"/><rect x="107" y="116" width="1" height="1" fill="#555"/><rect x="107" y="118" width="1" height="1" fill="#555"/><rect x="107" y="120" width="1" height="1" fill="#555"/><rect x="107" y="122" width="1" height="1" fill="#555"/>
<rect x="95" y="124" width="13" height="1" fill="#444"/>
<path d="M116 118h5v.4l-2.500 2.600-2.500-2.600z" fill="#666"/>
<path d="M144.700 112.300l5.700 5.400-5.700 5.600-5.700-5.400z" fill="#fff" stroke="#555" stroke-width="1.100"/><path d="M145.500 117.500v-6h-3v3.500" stroke="#555" stroke-width="1.100"/><path d="M150.500 115.300c2.500 1 3.300 3.500 1.700 6.800-.3-2-1-3.500-2.700-4.600z" fill="#3e7fc1" stroke="#3e7fc1" stroke-width=".5"/>
<rect x="137" y="123" width="16" height="4" fill="#ffff00"/>
<path d="M159 118h5v.4l-2.500 2.600-2.500-2.600z" fill="#666"/>
<rect x="171" y="123" width="16" height="4" fill="#ff0000"/>
<path d="M193 118h5v.4l-2.500 2.600-2.500-2.600z" fill="#666"/>
<rect x="235" y="65" width="14" height="1" fill="#6a6a6a"/><rect x="235" y="68" width="14" height="1" fill="#6a6a6a"/><rect x="235" y="71" width="14" height="1" fill="#6a6a6a"/>
<rect x="257" y="69" width="14" height="1" fill="#6a6a6a"/><rect x="257" y="72" width="14" height="1" fill="#6a6a6a"/><rect x="257" y="75" width="14" height="1" fill="#6a6a6a"/>
<rect x="279" y="74" width="14" height="1" fill="#6a6a6a"/><rect x="279" y="77" width="14" height="1" fill="#6a6a6a"/><rect x="279" y="80" width="14" height="1" fill="#6a6a6a"/>
<rect x="235" y="91" width="14" height="1" fill="#6a6a6a"/><rect x="235" y="94" width="10" height="1" fill="#6a6a6a"/><rect x="235" y="97" width="14" height="1" fill="#6a6a6a"/><rect x="235" y="100" width="10" height="1" fill="#6a6a6a"/>
<rect x="257" y="91" width="14" height="1" fill="#6a6a6a"/><rect x="259.0" y="94" width="10" height="1" fill="#6a6a6a"/><rect x="257" y="97" width="14" height="1" fill="#6a6a6a"/><rect x="259.0" y="100" width="10" height="1" fill="#6a6a6a"/>
<rect x="279" y="91" width="14" height="1" fill="#6a6a6a"/><rect x="283" y="94" width="10" height="1" fill="#6a6a6a"/><rect x="279" y="97" width="14" height="1" fill="#6a6a6a"/><rect x="283" y="100" width="10" height="1" fill="#6a6a6a"/>
<path d="M303.500 65.500h9.500v4h-9.500zM303.500 72.500h9.500v7h-9.500z" stroke="#6a6a6a" fill="#f6f6f6"/><path d="M305 67.500h12M305 74.500h6M305 76.500h6" stroke="#3e7fc1"/><path d="M318.500 69.500c.5 2.500-1.500 4-5 4" stroke="#3e7fc1" stroke-width="1.100"/><path d="M316 71l-2.800 2.600 3 2.400" stroke="#3e7fc1" stroke-width="1.100"/>
<path d="M303.500 88.500h14v14h-14zM303.500 92.500h14M303.500 98.500h14M310.500 88.500v4M310.500 98.500v4" stroke="#6a6a6a"/><path d="M305.500 95.500h10M307.500 93.500l-2 2 2 2M313.500 93.500l2 2-2 2" stroke="#3e7fc1"/>
<path d="M325 95h5v.4l-2.500 2.600-2.500-2.600z" fill="#666"/>
<rect x="234" y="112" width="16" height="1" fill="#6a6a6a"/><rect x="234" y="124" width="16" height="1" fill="#6a6a6a"/>
<rect x="242" y="115" width="8" height="1" fill="#6a6a6a"/><rect x="242" y="118" width="8" height="1" fill="#6a6a6a"/><rect x="242" y="121" width="8" height="1" fill="#6a6a6a"/>
<path d="M241 118.500h-6M238 115.500l-3 3 3 3" stroke="#3e7fc1" stroke-width="1.400"/>
<rect x="256" y="112" width="16" height="1" fill="#6a6a6a"/><rect x="256" y="124" width="16" height="1" fill="#6a6a6a"/>
<rect x="264" y="115" width="8" height="1" fill="#6a6a6a"/><rect x="264" y="118" width="8" height="1" fill="#6a6a6a"/><rect x="264" y="121" width="8" height="1" fill="#6a6a6a"/>
<path d="M256 118.500h6M259 115.500l3 3-3 3" stroke="#3e7fc1" stroke-width="1.400"/>
<path d="M293.500 125.700l8-8" stroke="#555" stroke-width="1.300"/><path d="M303.200 116l-4.600.5 4.100 4.100z" fill="#555"/>
<text transform="translate(290.300 123.600) rotate(-45)" font-size="10.500" fill="#444" font-family="Liberation Sans">ab</text>
<path d="M307 118h5v.4l-2.500 2.600-2.500-2.600z" fill="#666"/>
<path d="M369 95h5v.4l-2.500 2.600-2.500-2.600z" fill="#666"/>
<path d="M348 115.500h6M350.500 113l-2.500 2.500 2.500 2.500" stroke="#3e7fc1" stroke-width="1.400"/><path d="M369.500 122.500h6M373 120l2.500 2.500-2.500 2.500" stroke="#3e7fc1" stroke-width="1.400"/>
</svg>
<svg class="s" style="left:0;top:0" width="815" height="160" fill="none">
<path d="M434.500 65.500h13v12h-13z" fill="#fff" stroke="#777"/><path d="M441.500 65.500v12M434.500 69.500h13M434.500 73.500h13" stroke="#c8c8c8"/>
<rect x="435" y="66" width="6" height="3" fill="#d9502c"/><rect x="435" y="70" width="8" height="3" fill="#3e7fc1"/><rect x="435" y="74" width="4" height="3" fill="#d9502c"/>
<path d="M440.500 71.500h9v9h-9z" fill="#fff" stroke="#777"/><path d="M443 74.500h4M443 77.500h4M446.500 73l-3 6" stroke="#444" stroke-width="1"/>
<path d="M434.500 88.5h15v12h-15z" fill="#fff" stroke="#777" stroke-width="1.100"/>
<rect x="438" y="92.5" width="8" height="8" fill="#bdd7ee"/><path d="M434.500 92.5h15M434.500 96.5h15M437.700 88.5v12M441.700 88.5v12M445.900 88.5v12" stroke="#aaa"/>
<path d="M451 89.0l-12.500 14.500h3l9.500-11z" fill="#f1f1f1"/>
<path d="M450 90.5v4.600l-3.300 3.300-1.800-2.500z" fill="#666"/>
<path d="M438 103.6c1.500-3.200 3.500-5.800 6.200-5.800 1.500 0 2.500 1 2.500 2.400 0 2.600-3.700 3.900-8.700 3.400z" fill="#3e7fc1"/><path d="M444 99.3c1 .2 1.500 1 1.300 2" stroke="#fff" stroke-width=".8" fill="none"/>
<path d="M434.500 111.5h15v12h-15z" fill="#fff" stroke="#777" stroke-width="1.100"/>
<rect x="438" y="115.0" width="8" height="6" fill="#bdd7ee"/><path d="M434.500 114.5h15M437.700 111.5v12" stroke="#999"/><path d="M434.500 117.5h3M434.500 120.5h3M438 121.0h11" stroke="#bbb" stroke-width="1"/>
<path d="M451 112.0l-12.500 14.500h3l9.500-11z" fill="#f1f1f1"/>
<path d="M450 113.5v4.600l-3.300 3.300-1.800-2.500z" fill="#666"/>
<path d="M438 126.6c1.500-3.200 3.500-5.800 6.200-5.800 1.500 0 2.500 1 2.500 2.400 0 2.600-3.700 3.900-8.700 3.400z" fill="#3e7fc1"/><path d="M444 122.3c1 .2 1.500 1 1.300 2" stroke="#fff" stroke-width=".8" fill="none"/>
<path d="M580 72h5v.4l-2.500 2.600-2.500-2.600z" fill="#666"/>
<path d="M539 95h5v.4l-2.500 2.600-2.500-2.600z" fill="#666"/>
<path d="M509 118h5v.4l-2.500 2.600-2.500-2.600z" fill="#666"/>
<rect x="604.5" y="65.5" width="4.500" height="3.500" stroke="#777" fill="#fff"/><rect x="609.0" y="65.5" width="4.500" height="3.500" stroke="#777" fill="#fff"/>
<rect x="604.5" y="74.5" width="4.500" height="3.500" stroke="#777" fill="#fff"/><rect x="609.0" y="74.5" width="4.500" height="3.500" stroke="#777" fill="#fff"/><rect x="604.5" y="78.0" width="4.500" height="3.500" stroke="#777" fill="#fff"/><rect x="609.0" y="78.0" width="4.500" height="3.500" stroke="#777" fill="#fff"/>
<rect x="610.500" y="70.500" width="9.500" height="3.500" stroke="#777" fill="#bdd7ee"/><path d="M615.500 70.500v3.500" stroke="#777"/>
<path d="M609.500 72.200h-5M607 69.500l-2.700 2.700 2.700 2.700" stroke="#3e7fc1" stroke-width="1.500"/>
<path d="M662 72h5v.4l-2.500 2.600-2.500-2.600z" fill="#666"/>
<rect x="604.5" y="88.5" width="4.500" height="3.500" stroke="#777" fill="#fff"/><rect x="609.0" y="88.5" width="4.500" height="3.500" stroke="#777" fill="#fff"/>
<rect x="604.5" y="97.5" width="4.500" height="3.500" stroke="#777" fill="#fff"/><rect x="609.0" y="97.5" width="4.500" height="3.500" stroke="#777" fill="#fff"/><rect x="604.5" y="101.0" width="4.500" height="3.500" stroke="#777" fill="#fff"/><rect x="609.0" y="101.0" width="4.500" height="3.500" stroke="#777" fill="#fff"/>
<rect x="607.500" y="93.500" width="4.500" height="3" stroke="#777" fill="#bdd7ee"/>
<path d="M613 92l6.500 6.500M619.500 92l-6.500 6.500" stroke="#e0603c" stroke-width="1.500"/>
<path d="M666 95h5v.4l-2.500 2.600-2.500-2.600z" fill="#666"/>
<path d="M604.500 110.500v4M617.500 110.500v4M606 112.500h10M608 110.500l-2 2 2 2M614 110.500l2 2-2 2" stroke="#3e7fc1"/>
<path d="M604.500 115.500h14v9h-14z" fill="#fff" stroke="#777"/><path d="M604.500 118.500h14M604.500 121.500h14M608.500 115.500v9M613.500 115.500v9" stroke="#aaa"/><rect x="608" y="118" width="5" height="4" fill="#3e7fc1"/><path d="M605 126.500h5l1-1h6" stroke="#777"/>
<path d="M664 118h5v.4l-2.500 2.600-2.500-2.600z" fill="#666"/>
<path d="M702.300 68.300v-2.500h-13l6.800 6.700-6.800 6.700h13v-2.500" stroke="#444" stroke-width="2.200" stroke-linejoin="miter"/>
<path d="M710 72h5v.4l-2.500 2.600-2.500-2.600z" fill="#666"/>
<path d="M724.500 71.500l2.700-6.300 2.700 6.300M725.500 69.500h3.500" stroke="#3e7fc1" stroke-width="1.200"/><path d="M725 74.800h4.500l-4.500 5.500h5" stroke="#7d3fa6" stroke-width="1.200"/>
<path d="M732 70h7.500l-2.800 3v3.800h-1.900v-3.800z" fill="#777"/>
<path d="M743 72h5v.4l-2.500 2.600-2.500-2.600z" fill="#666"/>
<path d="M689.500 88.500h13.500v15h-13.500z" fill="#fff" stroke="#777"/><rect x="689" y="88" width="14.500" height="3.500" fill="#777"/><path d="M696.200 93v8M692.800 97.500l3.400 3.500 3.400-3.500" stroke="#3e7fc1" stroke-width="1.600"/>
<path d="M708 95h5v.4l-2.500 2.600-2.500-2.600z" fill="#666"/>
<circle cx="732.500" cy="94.200" r="3.700" stroke="#3e7fc1" stroke-width="1.400" fill="#fff"/><path d="M729.800 97.200l-4.800 4" stroke="#3e7fc1" stroke-width="2.200"/>
<path d="M743 95h5v.4l-2.500 2.600-2.500-2.600z" fill="#666"/>
<path d="M689.500 120l9-8 3.500 4.500-8 8h-2z" fill="#e8839a"/><path d="M691.500 119l3.500 4.500" stroke="#f1f1f1" stroke-width="1"/><rect x="694" y="124" width="9" height="1" fill="#666"/>
<path d="M708 118h5v.4l-2.500 2.600-2.500-2.600z" fill="#666"/>
<path d="M75.5 146v-5.500h5.500" stroke="#777"/><path d="M78 143l3 3" stroke="#777"/><path d="M82 143.500v3.500h-3.500z" fill="#777"/>
<path d="M215.5 146v-5.500h5.500" stroke="#777"/><path d="M218 143l3 3" stroke="#777"/><path d="M222 143.500v3.500h-3.500z" fill="#777"/>
<path d="M328.5 146v-5.500h5.500" stroke="#777"/><path d="M331 143l3 3" stroke="#777"/><path d="M335 143.500v3.500h-3.500z" fill="#777"/>
<path d="M415.5 146v-5.500h5.500" stroke="#777"/><path d="M418 143l3 3" stroke="#777"/><path d="M422 143.500v3.500h-3.500z" fill="#777"/>
<path d="M796 145.700l3.700-3.700 3.700 3.700" stroke="#666" stroke-width="1.900"/>
</svg>
<div class="r" style="left:1px;top:152px;width:813px;height:47px;background:#e6e6e6;"></div>
<div class="r" style="left:6px;top:162px;width:102px;height:26px;background:#fff;border:1px solid #c6c6c6;box-sizing:border-box;"></div>
<div class="r" style="left:138px;top:162px;width:110px;height:26px;background:#fff;border:1px solid #c6c6c6;box-sizing:border-box;"></div>
<div class="r" style="left:251px;top:162px;width:558px;height:26px;background:#fff;border:1px solid #c6c6c6;box-sizing:border-box;"></div>
<div class="t" style="top:166.37px;font-size:12.5px;color:#444;left:13.00px;letter-spacing:0.105px;">A2</div>
<div class="t" style="top:166.37px;font-size:12.5px;color:#444;left:263.00px;letter-spacing:0.049px;">1040553883</div>
<svg class="s" style="left:0;top:150px" width="815" height="50" viewBox="0 150 815 50" fill="none">
<path d="M94 172h7v.5l-3.500 3.500-3.500-3.500z" fill="#777"/>
<rect x="122" y="170" width="2" height="2" fill="#bbb"/><rect x="122" y="174" width="2" height="2" fill="#bbb"/><rect x="122" y="178" width="2" height="2" fill="#bbb"/>
<path d="M152 170.500l9.500 9M161.500 170.500l-9.500 9" stroke="#c0c0c0" stroke-width="1.900"/>
<path d="M187.500 175.500l3.500 3.500 8-8.500" stroke="#c4c4c4" stroke-width="2.500"/>
<path d="M797.500 172.500l3.500 3.500 3.500-3.500" stroke="#777" stroke-width="1.800"/>
</svg>
<div class="t" style="top:164.28px;font-size:14.5px;color:#666;left:224.00px;font-weight:bold;font-style:italic;font-family:'Liberation Serif',serif;">f</div>
<div class="t" style="top:166.91px;font-size:9.5px;color:#666;left:229.20px;font-weight:bold;font-style:italic;font-family:'Liberation Serif',serif;">x</div>
<div class="r" style="left:1px;top:199px;width:813px;height:331px;background:#e6e6e6;"></div>
<div class="r" style="left:27px;top:218px;width:766px;height:312px;background:#fff;"></div>
<div class="r" style="left:1px;top:217px;width:793px;height:1px;background:#ababab;"></div>
<div class="r" style="left:26px;top:199px;width:1px;height:331px;background:#ababab;"></div>
<div class="r" style="left:27px;top:199px;width:191px;height:18px;background:#d2d2d2;"></div>
<div class="r" style="left:27px;top:216px;width:192px;height:2px;background:#217346;"></div>
<div class="r" style="left:1px;top:239px;width:25px;height:159px;background:#d2d2d2;"></div>
<div class="r" style="left:218px;top:199px;width:1px;height:18px;background:#ababab;"></div>
<div class="r" style="left:344px;top:199px;width:1px;height:18px;background:#ababab;"></div>
<div class="r" style="left:470px;top:199px;width:1px;height:18px;background:#ababab;"></div>
<div class="r" style="left:596px;top:199px;width:1px;height:18px;background:#ababab;"></div>
<div class="r" style="left:722px;top:199px;width:1px;height:18px;background:#ababab;"></div>
<div class="r" style="left:218px;top:218px;width:1px;height:312px;background:#d4d4d4;"></div>
<div class="r" style="left:344px;top:218px;width:1px;height:312px;background:#d4d4d4;"></div>
<div class="r" style="left:470px;top:218px;width:1px;height:312px;background:#d4d4d4;"></div>
<div class="r" style="left:596px;top:218px;width:1px;height:312px;background:#d4d4d4;"></div>
<div class="r" style="left:722px;top:218px;width:1px;height:312px;background:#d4d4d4;"></div>
<div class="r" style="left:27px;top:238px;width:766px;height:1px;background:#d4d4d4;"></div>
<div class="r" style="left:1px;top:238px;width:25px;height:1px;background:#ababab;"></div>
<div class="r" style="left:27px;top:258px;width:766px;height:1px;background:#d4d4d4;"></div>
<div class="r" style="left:1px;top:258px;width:25px;height:1px;background:#ababab;"></div>
<div class="r" style="left:27px;top:278px;width:766px;height:1px;background:#d4d4d4;"></div>
<div class="r" style="left:1px;top:278px;width:25px;height:1px;background:#ababab;"></div>
<div class="r" style="left:27px;top:298px;width:766px;height:1px;background:#d4d4d4;"></div>
<div class="r" style="left:1px;top:298px;width:25px;height:1px;background:#ababab;"></div>
<div class="r" style="left:27px;top:318px;width:766px;height:1px;background:#d4d4d4;"></div>
<div class="r" style="left:1px;top:318px;width:25px;height:1px;background:#ababab;"></div>
<div class="r" style="left:27px;top:338px;width:766px;height:1px;background:#d4d4d4;"></div>
<div class="r" style="left:1px;top:338px;width:25px;height:1px;background:#ababab;"></div>
<div class="r" style="left:27px;top:358px;width:766px;height:1px;background:#d4d4d4;"></div>
<div class="r" style="left:1px;top:358px;width:25px;height:1px;background:#ababab;"></div>
<div class="r" style="left:27px;top:378px;width:766px;height:1px;background:#d4d4d4;"></div>
<div class="r" style="left:1px;top:378px;width:25px;height:1px;background:#ababab;"></div>
<div class="r" style="left:27px;top:398px;width:766px;height:1px;background:#d4d4d4;"></div>
<div class="r" style="left:1px;top:398px;width:25px;height:1px;background:#ababab;"></div>
<div class="r" style="left:27px;top:418px;width:766px;height:1px;background:#d4d4d4;"></div>
<div class="r" style="left:1px;top:418px;width:25px;height:1px;background:#ababab;"></div>
<div class="r" style="left:27px;top:438px;width:766px;height:1px;background:#d4d4d4;"></div>
<div class="r" style="left:1px;top:438px;width:25px;height:1px;background:#ababab;"></div>
<div class="r" style="left:27px;top:458px;width:766px;height:1px;background:#d4d4d4;"></div>
<div class="r" style="left:1px;top:458px;width:25px;height:1px;background:#ababab;"></div>
<div class="r" style="left:27px;top:478px;width:766px;height:1px;background:#d4d4d4;"></div>
<div class="r" style="left:1px;top:478px;width:25px;height:1px;background:#ababab;"></div>
<div class="r" style="left:27px;top:498px;width:766px;height:1px;background:#d4d4d4;"></div>
<div class="r" style="left:1px;top:498px;width:25px;height:1px;background:#ababab;"></div>
<div class="r" style="left:27px;top:518px;width:766px;height:1px;background:#d4d4d4;"></div>
<div class="r" style="left:1px;top:518px;width:25px;height:1px;background:#ababab;"></div>
<div class="r" style="left:792px;top:218px;width:1px;height:312px;background:#a0a0a0;"></div>
<div class="r" style="left:1px;top:529px;width:813px;height:1px;background:#ababab;"></div>
<svg class="s" style="left:10px;top:201px" width="14" height="14"><path d="M13 2v11h-11z" fill="#b7b7b7"/></svg>
<div class="t" style="top:198.37px;font-size:12.5px;color:#217346;left:118.33px;">A</div>
<div class="t" style="top:198.37px;font-size:12.5px;color:#1a1a1a;left:277.33px;">B</div>
<div class="t" style="top:198.37px;font-size:12.5px;color:#1a1a1a;left:402.99px;">C</div>
<div class="t" style="top:198.37px;font-size:12.5px;color:#1a1a1a;left:528.99px;">D</div>
<div class="t" style="top:198.37px;font-size:12.5px;color:#1a1a1a;left:655.33px;">E</div>
<div class="t" style="top:198.37px;font-size:12.5px;color:#1a1a1a;left:782.18px;">F</div>
<div class="t" style="top:220.07px;font-size:12.5px;color:#1a1a1a;left:10.12px;">1</div>
<div class="t" style="top:240.07px;font-size:12.5px;color:#217346;left:10.12px;">2</div>
<div class="t" style="top:260.07px;font-size:12.5px;color:#217346;left:10.12px;">3</div>
<div class="t" style="top:280.07px;font-size:12.5px;color:#217346;left:10.12px;">4</div>
<div class="t" style="top:300.07px;font-size:12.5px;color:#217346;left:10.12px;">5</div>
<div class="t" style="top:320.07px;font-size:12.5px;color:#217346;left:10.12px;">6</div>
<div class="t" style="top:340.07px;font-size:12.5px;color:#217346;left:10.12px;">7</div>
<div class="t" style="top:360.07px;font-size:12.5px;color:#217346;left:10.12px;">8</div>
<div class="t" style="top:380.07px;font-size:12.5px;color:#217346;left:10.12px;">9</div>
<div class="t" style="top:400.24px;font-size:12px;color:#1a1a1a;left:7.63px;">10</div>
<div class="t" style="top:420.24px;font-size:12px;color:#1a1a1a;left:8.07px;">11</div>
<div class="t" style="top:440.24px;font-size:12px;color:#1a1a1a;left:7.63px;">12</div>
<div class="t" style="top:460.24px;font-size:12px;color:#1a1a1a;left:7.63px;">13</div>
<div class="t" style="top:480.24px;font-size:12px;color:#1a1a1a;left:7.63px;">14</div>
<div class="t" style="top:500.24px;font-size:12px;color:#1a1a1a;left:7.63px;">15</div>
<div class="r" style="left:1px;top:518px;width:25px;height:11px;overflow:hidden"><div class="t" style="top:2.24px;font-size:12px;color:#1a1a1a;left:6.63px;">16</div></div>
<div class="r" style="left:27px;top:218px;width:191px;height:20px;background:#fff2cc;"></div>
<div class="r" style="left:27px;top:259px;width:191px;height:139px;background:#c6c6c6;"></div>
<div class="r" style="left:27px;top:278px;width:191px;height:1px;background:#b0b0b0;"></div>
<div class="r" style="left:27px;top:298px;width:191px;height:1px;background:#b0b0b0;"></div>
<div class="r" style="left:27px;top:318px;width:191px;height:1px;background:#b0b0b0;"></div>
<div class="r" style="left:27px;top:338px;width:191px;height:1px;background:#b0b0b0;"></div>
<div class="r" style="left:27px;top:358px;width:191px;height:1px;background:#b0b0b0;"></div>
<div class="r" style="left:27px;top:378px;width:191px;height:1px;background:#b0b0b0;"></div>
<div class="r" style="left:25px;top:236px;width:195px;height:163px;background:transparent;border:2px solid #217346;box-sizing:border-box;"></div>
<div class="r" style="left:27px;top:238px;width:191px;height:1px;background:#fff;"></div>
<div class="r" style="left:27px;top:396px;width:191px;height:1px;background:#fff;"></div>
<div class="r" style="left:27px;top:238px;width:1px;height:159px;background:#fff;"></div>
<div class="r" style="left:217px;top:238px;width:1px;height:159px;background:#fff;"></div>
<div class="r" style="left:215px;top:394px;width:6px;height:6px;background:#fff;"></div>
<div class="r" style="left:216px;top:395px;width:5px;height:5px;background:#217346;"></div>
<div class="t" style="top:217.67px;font-size:12.5px;color:#000;left:29.20px;letter-spacing:0.221px;font-weight:bold;">ID chương trình khuyến mãi</div>
<div class="t" style="top:217.67px;font-size:12.5px;color:#f00;left:202.50px;font-weight:bold;">*</div>
<div class="t" style="top:240.17px;font-size:12.5px;color:#000;left:146.20px;letter-spacing:0.049px;">1040553883</div>
<div class="t" style="top:260.17px;font-size:12.5px;color:#000;left:146.20px;letter-spacing:0.049px;">1040553827</div>
<div class="t" style="top:280.17px;font-size:12.5px;color:#000;left:146.20px;letter-spacing:0.049px;">1040549416</div>
<div class="t" style="top:300.17px;font-size:12.5px;color:#000;left:146.20px;letter-spacing:0.049px;">1040549363</div>
<div class="t" style="top:320.17px;font-size:12.5px;color:#000;left:146.20px;letter-spacing:0.049px;">1040549299</div>
<div class="t" style="top:340.17px;font-size:12.5px;color:#000;left:146.20px;letter-spacing:0.049px;">1040549298</div>
<div class="t" style="top:360.17px;font-size:12.5px;color:#000;left:146.20px;letter-spacing:0.049px;">1040549189</div>
<div class="t" style="top:380.17px;font-size:12.5px;color:#000;left:146.20px;letter-spacing:0.049px;">1040549188</div>
<svg class="s" style="left:208px;top:216px" width="12" height="10"><path d="M5 2h5v5z" fill="#f00"/></svg>
<svg class="s" style="left:0;top:0" width="815" height="580">
<filter id="sh2" x="-10%" y="-30%" width="120%" height="180%"><feDropShadow dx="1.200" dy="4" stdDeviation="2.200" flood-color="#2d2d19" flood-opacity=".6"/></filter>
<g font-family="Liberation Sans, sans-serif" font-weight="bold" font-size="24.25" text-anchor="middle">
<g filter="url(#sh2)" fill="#fff" stroke="#fff" stroke-width="7" stroke-linejoin="round">
<text x="373.7" y="283.3">File xóa chương trình</text>
<text x="373.7" y="312.40000000000003">khuyến mãi</text>
</g>
<g fill="#fc3439" stroke="#fff" stroke-width=".45">
<text x="373.7" y="283.3">File xóa chương trình</text>
<text x="373.7" y="312.40000000000003">khuyến mãi</text>
</g></g></svg>
<div class="r" style="left:793px;top:199px;width:21px;height:331px;background:#e6e6e6;"></div>
<div class="r" style="left:796px;top:200px;width:15px;height:330px;background:#dadada;"></div>
<div class="r" style="left:796px;top:200px;width:15px;height:15px;background:#fff;border:1px solid #ababab;box-sizing:border-box;"></div>
<div class="r" style="left:796px;top:515px;width:15px;height:15px;background:#fff;border:1px solid #ababab;box-sizing:border-box;"></div>
<div class="r" style="left:796px;top:215px;width:15px;height:225px;background:#fff;border:1px solid #ababab;box-sizing:border-box;"></div>
<svg class="s" style="left:796px;top:200px" width="15" height="330"><path d="M3.700 9.700h7.600l-3.800-3.900z" fill="#666"/><path d="M3.700 320.300h7.600l-3.800 3.900z" fill="#666"/></svg>
<div class="r" style="left:1px;top:530px;width:813px;height:28px;background:#e6e6e6;"></div>
<div class="r" style="left:101px;top:529px;width:209px;height:25px;background:#fff;border-left:1px solid #ababab;border-right:1px solid #ababab;box-sizing:border-box;"></div>
<div class="r" style="left:101px;top:552px;width:209px;height:2px;background:#217346;"></div>
<div class="t" style="top:533.27px;font-size:12.5px;color:#217346;left:113.50px;letter-spacing:0.290px;font-weight:bold;">Xóa chương trình khuyến mãi</div>
<svg class="s" style="left:0;top:530px" width="815" height="27" viewBox="0 530 815 27" fill="none">
<path d="M32 539.200v7l-4-3.500z" fill="#c6c6c6"/><path d="M57 539.200v7l4-3.500z" fill="#c6c6c6"/>
<circle cx="351" cy="542.800" r="7.300" stroke="#777" stroke-width="1.300"/><path d="M347.3 542.800h7.400M351 539.100v7.400" stroke="#666" stroke-width="1.800"/>
<rect x="489" y="539" width="2" height="2" fill="#bbb"/><rect x="489" y="543" width="2" height="2" fill="#bbb"/><rect x="489" y="547" width="2" height="2" fill="#bbb"/>
</svg>
<div class="r" style="left:506px;top:536px;width:287px;height:15px;background:#dadada;"></div>
<div class="r" style="left:506px;top:536px;width:15px;height:15px;background:#fff;border:1px solid #ababab;box-sizing:border-box;"></div>
<div class="r" style="left:778px;top:536px;width:15px;height:15px;background:#fff;border:1px solid #ababab;box-sizing:border-box;"></div>
<div class="r" style="left:520px;top:536px;width:193px;height:15px;background:#fff;border:1px solid #ababab;box-sizing:border-box;"></div>
<svg class="s" style="left:506px;top:536px" width="287" height="15"><path d="M9.500 4v7l-4-3.500z" fill="#666"/><path d="M278 4v7l4-3.500z" fill="#666"/></svg>
<div class="r" style="left:1px;top:557px;width:813px;height:1px;background:#c6c6c6;"></div>
<div class="r" style="left:1px;top:558px;width:813px;height:21px;background:#f1f1f1;"></div>
<div class="r" style="left:511px;top:558px;width:38px;height:21px;background:#c6c6c6;"></div>
<div class="t" style="top:557.99px;font-size:11px;color:#555;left:8.10px;letter-spacing:-0.059px;">Ready</div>
<div class="t" style="top:557.99px;font-size:11px;color:#555;left:220.50px;letter-spacing:-0.013px;">Average: 1040550433</div>
<div class="t" style="top:557.99px;font-size:11px;color:#555;left:343.80px;letter-spacing:0.352px;">Count: 8</div>
<div class="t" style="top:557.99px;font-size:11px;color:#555;left:403.50px;letter-spacing:-0.093px;">Sum: 8324403463</div>
<div class="t" style="top:557.99px;font-size:11px;color:#555;left:767.20px;letter-spacing:-0.283px;">100%</div>
<svg class="s" style="left:0;top:557px" width="815" height="22" viewBox="0 557 815 22" fill="none">
<path d="M523.500 561.500h12.500v12.500h-12.500zM527.700 561.500v12.500M531.800 561.500v12.500M523.500 565.700h12.500M523.500 569.800h12.500" stroke="#666" stroke-width="1.200"/>
<path d="M561.500 561.500h13v12.500h-13z" stroke="#666" stroke-width="1.200"/><path d="M564.500 563.500h7v8h-7z" stroke="#666" stroke-width="1.100"/><path d="M566 565.700h4M566 567.600h4M566 569.500h4" stroke="#666" stroke-width=".9"/>
<path d="M599.500 561.500h13v12.500h-13z" stroke="#666" stroke-width="1.200"/><path d="M599.500 568.500h8.500v-7M603.700 561.500v7" stroke="#666" stroke-width="1.100"/>
<rect x="630" y="567.500" width="7" height="2" fill="#555"/>
<rect x="640" y="568" width="100" height="1" fill="#999"/>
<rect x="688" y="562" width="4" height="11" fill="#666"/>
<path d="M744 568.500h9M748.500 564v9" stroke="#555" stroke-width="2"/>
<path d="M60.500 566v7.500h11v-11h-5" stroke="#777" stroke-width="1.100"/><rect x="66" y="562" width="6" height="2.500" fill="#777"/><circle cx="62" cy="564" r="3" fill="#777"/><path d="M62 567.500h8M62 569.500h8M62 571.500h8" stroke="#777" stroke-dasharray="2 1"/>
</svg>
</div>
</body></html>
